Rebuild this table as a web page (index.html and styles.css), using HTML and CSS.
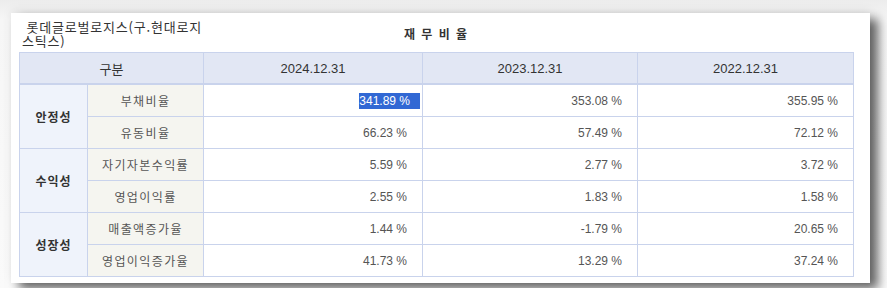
FILE: index.html
```html
<!DOCTYPE html>
<html lang="ko">
<head>
<meta charset="utf-8">
<link rel="stylesheet" href="styles.css">
</head>
<body>
<div class="card">
  <div class="titlebar">
    <div class="company">&nbsp;롯데글로벌로지스(구.현대로지스틱스)</div>
    <div class="heading">재 무 비 율</div>
    <div class="spacer"></div>
  </div>
  <table class="ratios">
    <colgroup>
      <col class="c1"><col class="c2"><col class="c3"><col class="c4"><col class="c5">
    </colgroup>
    <thead>
      <tr><th colspan="2">구분</th><th>2024.12.31</th><th>2023.12.31</th><th>2022.12.31</th></tr>
    </thead>
    <tbody>
      <tr><td class="cat" rowspan="2">안정성</td><td class="item">부채비율</td><td class="num"><span class="sel">341.89 %&nbsp;&nbsp;&nbsp;</span></td><td class="num">353.08 %</td><td class="num">355.95 %</td></tr>
      <tr><td class="item">유동비율</td><td class="num">66.23 %</td><td class="num">57.49 %</td><td class="num">72.12 %</td></tr>
      <tr><td class="cat" rowspan="2">수익성</td><td class="item">자기자본수익률</td><td class="num">5.59 %</td><td class="num">2.77 %</td><td class="num">3.72 %</td></tr>
      <tr><td class="item">영업이익률</td><td class="num">2.55 %</td><td class="num">1.83 %</td><td class="num">1.58 %</td></tr>
      <tr><td class="cat" rowspan="2">성장성</td><td class="item">매출액증가율</td><td class="num">1.44 %</td><td class="num">-1.79 %</td><td class="num">20.65 %</td></tr>
      <tr><td class="item">영업이익증가율</td><td class="num">41.73 %</td><td class="num">13.29 %</td><td class="num">37.24 %</td></tr>
    </tbody>
  </table>
</div>
</body>
</html>
```
FILE: styles.css
```css
html, body { margin: 0; padding: 0; }
body {
  width: 887px;
  height: 288px;
  overflow: hidden;
  background: linear-gradient(#ececec, #f6f6f6 20px, #fafafa);
  font-family: "Liberation Sans", "Noto Sans CJK KR", sans-serif;
  color: #444;
}
.card {
  margin: 13px 0 0 11px;
  width: 859px;
  height: 270px;
  box-sizing: border-box;
  background: #fff;
  padding: 0 0 0 8px;
  box-shadow: 8px 6px 10px rgba(0,0,0,0.6), 0 -3px 10px rgba(0,0,0,0.06);
}
.titlebar {
  display: grid;
  grid-template-columns: 1fr auto 1fr;
  width: 834px;
  height: 39px;
  align-items: start;
}
.company {
  width: 186px;
  padding: 7px 0 0 3px;
  font-family: "Noto Sans CJK KR", sans-serif;
  font-size: 13px;
  line-height: 14px;
  letter-spacing: 0.8px;
  color: #333;
  word-break: break-all;
}
.heading {
  padding-top: 14px;
  font-family: "Noto Sans CJK KR", sans-serif;
  font-weight: bold;
  font-size: 12px;
  line-height: 14px;
  color: #333;
  word-spacing: 1px;
  letter-spacing: 1px;
}
.ratios {
  border-collapse: collapse;
  table-layout: fixed;
  width: 834px;
  font-size: 12px;
}
.c1 { width: 68px; }
.c2 { width: 116px; }
.c3 { width: 219px; }
.c4 { width: 215px; }
.c5 { width: 216px; }
.ratios th, .ratios td {
  border: 1px solid #c9d3ec;
  padding: 0;
  height: 31px;
}
.ratios th {
  height: 30px;
  background: #e2e7f4;
  font-weight: normal;
  font-size: 13px;
  color: #333;
  text-align: center;
}
.ratios thead tr { border-bottom: 2px solid #c9d3ec; }
.cat {
  background: #eff3fb;
  font-family: "Noto Sans CJK KR", sans-serif;
  font-weight: bold;
  letter-spacing: 1px;
  color: #333;
  text-align: center;
}
.item {
  background: #f5f5f0;
  font-family: "Noto Sans CJK KR", sans-serif;
  letter-spacing: 1.4px;
  color: #555;
  text-align: center;
}
.num {
  text-align: right;
  padding-right: 15px !important;
  color: #555;
}
.sel {
  background: #3168d4;
  color: #fff;
  margin-right: -13px;
  padding: 1px 0;
}
```
